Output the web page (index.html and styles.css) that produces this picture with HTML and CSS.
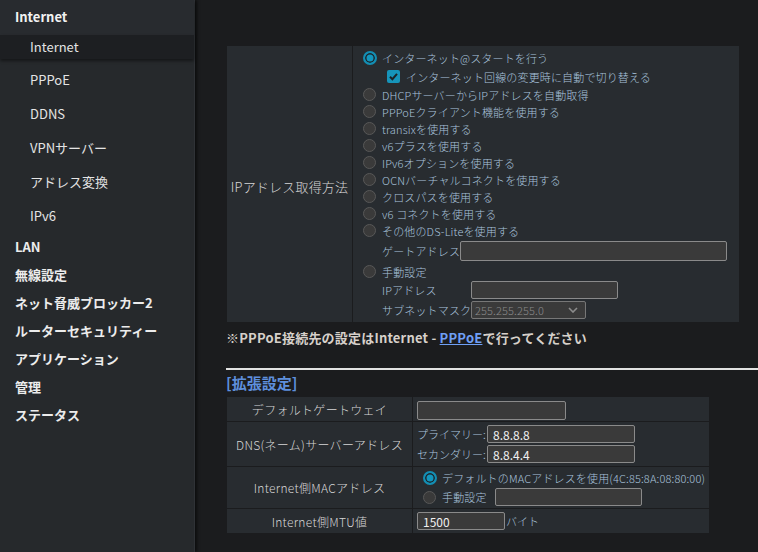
FILE: index.html
```html
<!DOCTYPE html>
<html lang="ja">
<head>
<meta charset="utf-8">
<title>Internet</title>
<link rel="stylesheet" href="styles.css">
</head>
<body>
<nav class="sidebar">
  <div class="group-head">Internet</div>
  <ul class="sub">
    <li class="active">Internet</li>
    <li>PPPoE</li>
    <li>DDNS</li>
    <li>VPNサーバー</li>
    <li>アドレス変換</li>
    <li>IPv6</li>
  </ul>
  <ul class="top">
    <li>LAN</li>
    <li>無線設定</li>
    <li>ネット脅威ブロッカー2</li>
    <li>ルーターセキュリティー</li>
    <li>アプリケーション</li>
    <li>管理</li>
    <li>ステータス</li>
  </ul>
</nav>
<main class="main">
  <table class="tbl tbl1">
    <tr>
      <td class="lbl lbl1">IPアドレス取得方法</td>
      <td class="val1">
        <div class="opt h18"><span class="radio on"></span>インターネット@スタートを行う</div>
        <div class="opt h19 indent"><span class="cbox"><svg width="13" height="13" viewBox="0 0 13 13"><polyline points="3,6.8 5.4,9.2 10,3.8" fill="none" stroke="#1b2328" stroke-width="2"/></svg></span>インターネット回線の変更時に自動で切り替える</div>
        <div class="opt"><span class="radio"></span>DHCPサーバーからIPアドレスを自動取得</div>
        <div class="opt"><span class="radio"></span>PPPoEクライアント機能を使用する</div>
        <div class="opt"><span class="radio"></span>transixを使用する</div>
        <div class="opt"><span class="radio"></span>v6プラスを使用する</div>
        <div class="opt"><span class="radio"></span>IPv6オプションを使用する</div>
        <div class="opt"><span class="radio"></span>OCNバーチャルコネクトを使用する</div>
        <div class="opt"><span class="radio"></span>クロスパスを使用する</div>
        <div class="opt"><span class="radio"></span>v6 コネクトを使用する</div>
        <div class="opt"><span class="radio"></span>その他のDS-Liteを使用する</div>
        <div class="opt h24 subrow"><span class="sublabel w-gw">ゲートアドレス</span><input class="field f-gw" type="text" value=""></div>
        <div class="opt"><span class="radio"></span>手動設定</div>
        <div class="opt h20 subrow"><span class="sublabel w-ip">IPアドレス</span><input class="field f-ip" type="text" value=""></div>
        <div class="opt h19 subrow"><span class="sublabel w-ip">サブネットマスク</span><span class="selectbox">255.255.255.0<svg class="chev" width="10" height="6" viewBox="0 0 10 6"><polyline points="1,1 5,5 9,1" fill="none" stroke="#8c8c8c" stroke-width="1.6"/></svg></span></div>
      </td>
    </tr>
  </table>
  <p class="note">※PPPoE接続先の設定はInternet - <a href="#">PPPoE</a>で行ってください</p>
  <hr class="rule">
  <h2 class="section">[拡張設定]</h2>
  <table class="tbl tbl2">
    <tr class="r1">
      <td class="lbl lbl2">デフォルトゲートウェイ</td>
      <td class="val2"><input class="field f-gw2" type="text" value=""></td>
    </tr>
    <tr class="r2">
      <td class="lbl lbl2">DNS(ネーム)サーバーアドレス</td>
      <td class="val2">
        <div class="dns"><span class="dnslabel">プライマリー:</span><input class="field f-dns" type="text" value="8.8.8.8"></div>
        <div class="dns"><span class="dnslabel">セカンダリー:</span><input class="field f-dns" type="text" value="8.8.4.4"></div>
      </td>
    </tr>
    <tr class="r3">
      <td class="lbl lbl2">Internet側MACアドレス</td>
      <td class="val2 mac">
        <div class="opt h19"><span class="radio on"></span>デフォルトのMACアドレスを使用(4C:85:8A:08:80:00)</div>
        <div class="opt h19"><span class="radio"></span><span class="manual">手動設定</span><input class="field f-mac" type="text" value=""></div>
      </td>
    </tr>
    <tr class="r4">
      <td class="lbl lbl2">Internet側MTU値</td>
      <td class="val2"><div class="mtu"><input class="field f-mtu" type="text" value="1500"><span class="unit">バイト</span></div></td>
    </tr>
  </table>
</main>
</body>
</html>
```
FILE: styles.css
```css
* { box-sizing: border-box; }
html, body { margin: 0; padding: 0; }
body {
  background: #1b1c1e;
  font-family: "Noto Sans CJK JP", "Noto Sans", sans-serif;
  display: flex;
  height: 552px;
  overflow: hidden;
  color: #e6e6e6;
}

/* sidebar */
.sidebar {
  width: 195px;
  flex: none;
  background: #26292c;
  border-right: 1px solid #2f3236;
  box-shadow: 2px 0 3px rgba(0,0,0,0.55);
  position: relative;
  z-index: 1;
}
.sidebar ul { list-style: none; margin: 0; padding: 0; }
.group-head {
  height: 35px;
  line-height: 33px;
  padding-left: 15px;
  font-size: 13px;
  font-weight: bold;
  color: #f2f2f2;
  background: #282b2f;
  box-shadow: 0 2px 3px rgba(0,0,0,0.45);
  position: relative;
}
.sub li {
  height: 34px;
  line-height: 34px;
  padding-left: 30px;
  font-size: 13px;
  color: #e4e4e4;
}
.sub li.active {
  height: 24px;
  line-height: 24px;
  background: #1d1f22;
  margin-bottom: 4px;
  box-shadow: 0 2px 3px rgba(0,0,0,0.45);
  position: relative;
}
.top li {
  height: 28px;
  line-height: 28px;
  padding-left: 15px;
  font-size: 13px;
  font-weight: bold;
  color: #ececec;
}

/* main */
.main {
  flex: 1;
  padding: 45px 0 0 31px;
}
.tbl {
  border-collapse: collapse;
  background: #282c30;
}
.tbl td {
  border: 1px solid #1b1c1e;
  padding: 0;
}
.tbl1 { width: 514px; }
.lbl {
  color: #d6d6d6;
  text-align: center;
  vertical-align: middle;
  font-weight: 300;
}
.lbl1 { width: 126px; font-size: 13px; padding-top: 4px !important; letter-spacing: 0.2px; }
.val1 { padding: 3px 0 3px 10px !important; }

.opt {
  display: flex;
  align-items: center;
  height: 17px;
  font-size: 11px;
  font-weight: 300;
  color: #a8c3dd;
  white-space: nowrap;
  letter-spacing: 0.15px;
}
.h18 { height: 18px; }
.h19 { height: 19px; }
.h20 { height: 20px; }
.h24 { height: 24px; }
.indent { padding-left: 24px; }
.subrow { padding-left: 19px; }

.radio {
  width: 13px;
  height: 13px;
  border-radius: 50%;
  background: #3a3a3a;
  border: 1px solid #585858;
  margin-right: 6px;
  flex: none;
}
.radio.on {
  width: 14px;
  height: 14px;
  margin-right: 5px;
  background: #1396bd;
  border: 2px solid #138eb3;
  box-shadow: inset 0 0 0 1.5px #1c262c;
}
.cbox {
  width: 13px;
  height: 13px;
  border-radius: 2px;
  background: #1694ba;
  margin-right: 6px;
  flex: none;
  display: flex;
}

.sublabel { flex: none; }
.w-gw { width: 78px; }
.w-ip { width: 89px; }

.field {
  background: #3a3a3a;
  border: 1px solid #8a8a8a;
  border-radius: 2px;
  color: #f0f0f0;
  font-family: "Noto Sans CJK JP", "Noto Sans", sans-serif;
  font-size: 12px;
  padding: 0 0 0 5px;
  margin: 0;
  outline: none;
}
.f-gw { width: 267px; height: 20px; }
.f-ip { width: 147px; height: 18px; }
.selectbox {
  position: relative;
  width: 115px;
  height: 18px;
  background: #3a3a3a;
  border: 1px solid #777;
  border-radius: 2px;
  color: #8a8a8a;
  font-size: 11px;
  line-height: 16px;
  padding-left: 3px;
}
.chev { position: absolute; right: 7px; top: 5px; }

.note {
  margin: 6px 0 0 0;
  font-size: 13px;
  font-weight: bold;
  line-height: 18px;
  color: #d6d0ca;
  letter-spacing: 0.2px;
}
.note a { color: #6f9ff5; }

.rule {
  margin: 21px 0 0 0;
  border: 0;
  height: 2px;
  background: #e2e2e2;
}
.section {
  margin: 3px 0 0 0;
  font-size: 15px;
  line-height: 20px;
  font-weight: bold;
  color: #5e8fdc;
}

.tbl2 { width: 484px; margin-top: 3px; }
.lbl2 { width: 186px; font-size: 12px; letter-spacing: 0.3px; }
.val2 { padding: 0 0 0 4px !important; vertical-align: middle; }
.r1 td { height: 22px; }
.r2 td { height: 45px; }
.r3 td { height: 42px; }
.r4 td { height: 25px; }
.f-gw2 { width: 149px; height: 19px; }

.dns {
  display: flex;
  align-items: center;
  height: 20px;
  font-size: 11px;
  font-weight: 300;
  color: #a8c3dd;
}
.dnslabel { width: 70px; flex: none; }
.f-dns { width: 148px; height: 18px; }

.val2.mac { padding-left: 10px !important; }
.manual { width: 53px; flex: none; }
.f-mac { width: 147px; height: 18px; }

.mtu { display: flex; align-items: center; }
.f-mtu { width: 88px; height: 18px; }
.unit { font-size: 11px; font-weight: 300; color: #a8c3dd; margin-left: 1px; }
```
